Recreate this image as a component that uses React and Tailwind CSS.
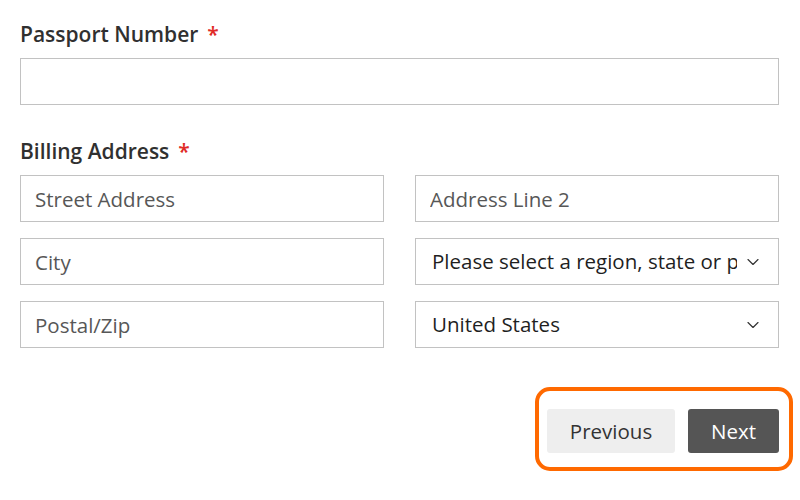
import { ChevronDown } from 'lucide-react';

function Label({ children }) {
  return (
    <div className="flex items-center gap-[9px] text-[21px] font-semibold text-[#303030] leading-[28px]">
      <span>{children}</span>
      <span className="text-[#e02b27]">*</span>
    </div>
  );
}

function TextInput({ placeholder }) {
  return (
    <input
      type="text"
      placeholder={placeholder}
      className="h-[47px] w-full border border-[#c2c2c2] bg-white px-[14px] text-[20.5px] text-[#1f1f1f] placeholder:text-[#575757] outline-none"
    />
  );
}

function Select({ value }) {
  return (
    <div className="flex h-[47px] w-full items-center border border-[#c2c2c2] bg-white pl-[16px] pr-[15px]">
      <div className="min-w-0 flex-1 overflow-hidden whitespace-nowrap text-[20.5px] leading-[45px] text-[#1f1f1f]">
        {value}
      </div>
      <ChevronDown className="ml-[6px] shrink-0 text-[#333]" size={20} strokeWidth={1.4} />
    </div>
  );
}

export default function App() {
  return (
    <div className="min-h-[500px] bg-white px-[20px] pt-[20px] font-['Open_Sans',sans-serif] w-[799px]">
      <Label>Passport Number</Label>
      <div className="mt-[10px]">
        <TextInput />
      </div>

      <div className="mt-[32px]">
        <Label>Billing Address</Label>
      </div>
      <div className="mt-[10px] grid grid-cols-2 gap-x-[31px] gap-y-[16px]">
        <TextInput placeholder="Street Address" />
        <TextInput placeholder="Address Line 2" />
        <TextInput placeholder="City" />
        <Select value="Please select a region, state or province." />
        <TextInput placeholder="Postal/Zip" />
        <Select value="United States" />
      </div>

      <div className="mt-[61px] flex justify-end">
        <div className="relative flex gap-[13px]">
          <span className="pointer-events-none absolute -left-[12px] -right-[14px] -top-[22px] -bottom-[18px] rounded-[15px] border-[4px] border-[#ff6900]"></span>
          <button className="h-[44px] w-[128px] rounded-[3px] bg-[#eeeeee] text-[20.5px] text-[#333]">Previous</button>
          <button className="h-[44px] w-[91px] rounded-[3px] bg-[#555555] text-[20.5px] text-white">Next</button>
        </div>
      </div>
    </div>
  );
}
